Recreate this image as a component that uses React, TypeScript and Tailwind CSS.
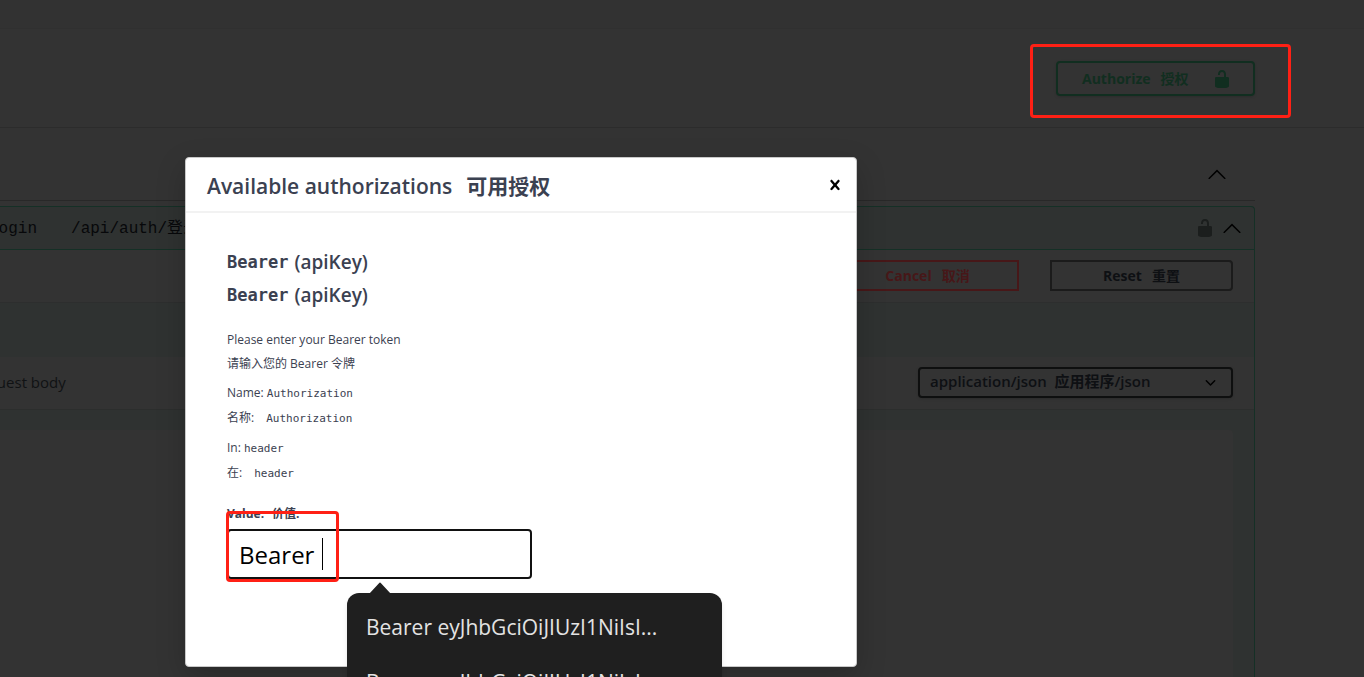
import React from "react";

const details = [
  { label: "Name:", labelZh: "名称:", value: "Authorization" },
  { label: "In:", labelZh: "在:", value: "header" },
];

const suggestions = ["Bearer eyJhbGciOiJIUzI1NiIsI...", "Bearer eyJhbGciOiJIUzI1NiIsI..."];

function UnlockIcon() {
  return (
    <svg viewBox="0 0 20 20" width="20" height="20" fill="currentColor" aria-hidden="true">
      <path d="M15.8 8H14V5.6C14 2.703 12.665 1 10 1 7.334 1 6 2.703 6 5.6V6h2v-.801C8 3.754 8.797 3 10 3c1.203 0 2 .754 2 2.199V8H4c-.553 0-1 .646-1 1.199V17c0 .549.428 1.139.951 1.307l1.197.387C5.672 18.861 6.55 19 7.1 19h5.8c.549 0 1.428-.139 1.951-.307l1.196-.387c.524-.167.953-.757.953-1.306V9.199C17 8.646 16.352 8 15.8 8z" />
    </svg>
  );
}

function ArrowUpIcon() {
  return (
    <svg viewBox="0 0 20 20" width="20" height="20" fill="currentColor" aria-hidden="true">
      <path d="M17.418 14.908c.272.281.701.281.969 0s.268-.736 0-1.018l-7.908-7.83c-.27-.281-.707-.281-.969 0L1.602 13.89c-.268.281-.268.736 0 1.018s.701.281.969 0L10 7.767l7.418 7.141z" />
    </svg>
  );
}

function Highlight({ className }: { className: string }) {
  return <div className={`pointer-events-none absolute rounded-[4px] border-[3px] border-[#ff2015] ${className}`} />;
}

function ApiPage() {
  return (
    <div className="flex h-full flex-col bg-[#333333]">
      <div className="h-[29px] shrink-0 border-b border-[#303030] bg-[#323232]" />
      <header className="flex h-[99px] shrink-0 items-start justify-end border-b border-[#2c2c2c] pt-8 pr-[109px]">
        <div className="relative">
          <button className="flex h-[35px] w-[199px] items-center justify-between rounded-[4px] border-2 border-[#112e20] pr-[21px] pl-6 text-[14px] font-bold text-[#112e20] shadow-sm">
            <span className="flex gap-[10px]">
              <span>Authorize</span>
              <span>授权</span>
            </span>
            <UnlockIcon />
          </button>
          <Highlight className="-top-[17px] -right-9 -bottom-[22px] -left-[26px]" />
        </div>
      </header>

      <main className="flex min-h-0 grow flex-col pr-[109px]">
        <div className="flex h-[73px] shrink-0 items-center justify-end border-b border-[#282828] pt-5 pr-7">
          <button aria-label="Collapse section" className="text-black">
            <ArrowUpIcon />
          </button>
        </div>

        <section className="mt-[5px] flex grow flex-col rounded-tr-[4px] border-t border-r border-[#153026] bg-[#2f3231]">
          <div className="flex h-[43px] shrink-0 items-center border-b border-[#153026] pr-3">
            <div className="-ml-[107px] flex grow gap-[34px] pt-[2px] font-['Liberation_Mono','Noto_Sans_CJK_SC',monospace] text-[16px] whitespace-nowrap text-[#07080a]">
              <span>/api/auth/login</span>
              <span>/api/auth/登录</span>
            </div>
            <button aria-label="Unlock operation" className="text-[#1b1e1d]">
              <UnlockIcon />
            </button>
            <button aria-label="Collapse operation" className="ml-[7px] text-black">
              <ArrowUpIcon />
            </button>
          </div>

          <div className="flex h-[53px] shrink-0 items-center justify-end gap-[31px] border-b border-[#2d2e2e] bg-[#333333] pr-[21px] pb-[2px] text-[14px] font-bold">
            <button className="flex h-[31px] w-[183px] items-center justify-center gap-[10px] border-2 border-[#471718] text-[#471718]">
              <span>Cancel</span>
              <span>取消</span>
            </button>
            <button className="flex h-[31px] w-[183px] items-center justify-center gap-[10px] rounded-r-[4px] border-2 border-[#1b1b1b] text-[#0e1013]">
              <span>Reset</span>
              <span>重置</span>
            </button>
          </div>

          <div className="h-[54px] shrink-0" />

          <div className="flex h-[53px] shrink-0 items-center justify-between border-b border-[#2c2e2d] bg-[#333333] pr-[21px] pb-[2px]">
            <h4 className="-ml-[30px] text-[15px] text-[#101214]">Request body</h4>
            <div className="relative">
              <select
                aria-label="Request content type"
                className="block h-[31px] w-[315px] appearance-none rounded-[4px] border-2 border-[#0e0f0f] bg-transparent pr-9 pb-[2px] pl-[10px] text-[15px] font-semibold text-[#0e1013] shadow-sm"
              >
                <option>application/json&nbsp; 应用程序/json</option>
              </select>
              <svg
                className="pointer-events-none absolute top-[11px] right-[17px] text-black"
                width="11"
                height="10"
                viewBox="0 0 11 10"
                fill="none"
                stroke="currentColor"
                strokeWidth="1.5"
                strokeLinecap="round"
                strokeLinejoin="round"
                aria-hidden="true"
              >
                <path d="M1.3 2.8 5.5 7 9.7 2.8" />
              </svg>
            </div>
          </div>

          <div className="flex grow pt-5 pr-[21px]">
            <div className="grow rounded-tr-[4px] bg-[#333333]" />
          </div>
        </section>
      </main>
    </div>
  );
}

function AuthorizationDialog() {
  return (
    <div
      role="dialog"
      aria-labelledby="dialog-title"
      className="absolute top-[157px] left-[185px] w-[672px] rounded-[4px] border border-[#c9c9c9] bg-white pb-[87px] text-[#3b4151] shadow-[0_10px_30px_rgba(0,0,0,0.2)]"
    >
      <div className="flex h-[55px] items-center justify-between border-b-2 border-[#f2f2f2] pr-[11px] pl-[21px]">
        <h3 id="dialog-title" className="flex gap-[14px] pt-1 text-[21px] font-semibold">
          <span>Available authorizations</span>
          <span className="font-bold">可用授权</span>
        </h3>
        <button aria-label="Close" className="text-black">
          <svg viewBox="0 0 20 20" width="20" height="20" fill="currentColor" aria-hidden="true">
            <path d="M14.348 14.849c-.469.469-1.229.469-1.697 0L10 11.819l-2.651 3.029c-.469.469-1.229.469-1.697 0-.469-.469-.469-1.229 0-1.697l2.758-3.15-2.759-3.152c-.469-.469-.469-1.228 0-1.697s1.228-.469 1.697 0L10 8.183l2.651-3.031c.469-.469 1.228-.469 1.697 0s.469 1.229 0 1.697l-2.758 3.152 2.758 3.15c.469.469.469 1.229 0 1.698z" />
          </svg>
        </button>
      </div>

      <div className="px-[41px] pt-[33px]">
        {[0, 1].map((row) => (
          <h4 key={row} className="flex h-[33px] items-center gap-[6px] text-[19px] font-semibold">
            <code className="font-['DejaVu_Sans_Mono',monospace] text-[17px] font-bold">Bearer</code>
            <span>(apiKey)</span>
          </h4>
        ))}

        <div className="mt-4 text-[12px] leading-6">
          <p>Please enter your Bearer token</p>
          <p>请输入您的 Bearer 令牌</p>
        </div>

        {details.map((item) => (
          <div key={item.label} className="mt-[5px] text-[12px] leading-6">
            <p>
              {item.label} <code className="font-['DejaVu_Sans_Mono',monospace] text-[11px]">{item.value}</code>
            </p>
            <p>
              {item.labelZh}
              <code className="ml-3 font-['DejaVu_Sans_Mono',monospace] text-[11px]">{item.value}</code>
            </p>
          </div>
        ))}

        <label htmlFor="token" className="mt-4 flex h-[23px] items-center gap-2 text-[12px] font-bold">
          <span>Value:</span>
          <span>价值:</span>
        </label>
        <div className="relative mt-1 w-[305px]">
          <input
            id="token"
            type="text"
            defaultValue="Bearer "
            className="block h-[50px] w-full rounded-[4px] border-2 border-[#111111] bg-white px-[10px] text-[24px] text-black outline-none"
          />
          <div className="absolute top-[9px] left-[95px] h-8 w-px bg-black" />
          <Highlight className="-top-[18px] -left-px h-[71px] w-[113px]" />

          <div className="absolute top-16 left-[120px] w-[375px] rounded-t-[12px] bg-[#1f1f1f] text-[#e3e3e3] shadow-md">
            <svg className="absolute -top-[11px] left-[22px]" width="22" height="12" viewBox="0 0 22 12" aria-hidden="true">
              <path d="M0 12 10 1.2Q11 0 12 1.2L22 12Z" fill="#1f1f1f" />
            </svg>
            <ul className="pt-[7px]">
              {suggestions.map((text, i) => (
                <li key={i} className="flex h-[55px] items-center px-[19px] text-[21px]">
                  {text}
                </li>
              ))}
            </ul>
          </div>
        </div>
      </div>
    </div>
  );
}

export default function App() {
  return (
    <div className="relative h-screen overflow-hidden font-['Open_Sans','Noto_Sans_CJK_SC',sans-serif]">
      <ApiPage />
      <AuthorizationDialog />
    </div>
  );
}
